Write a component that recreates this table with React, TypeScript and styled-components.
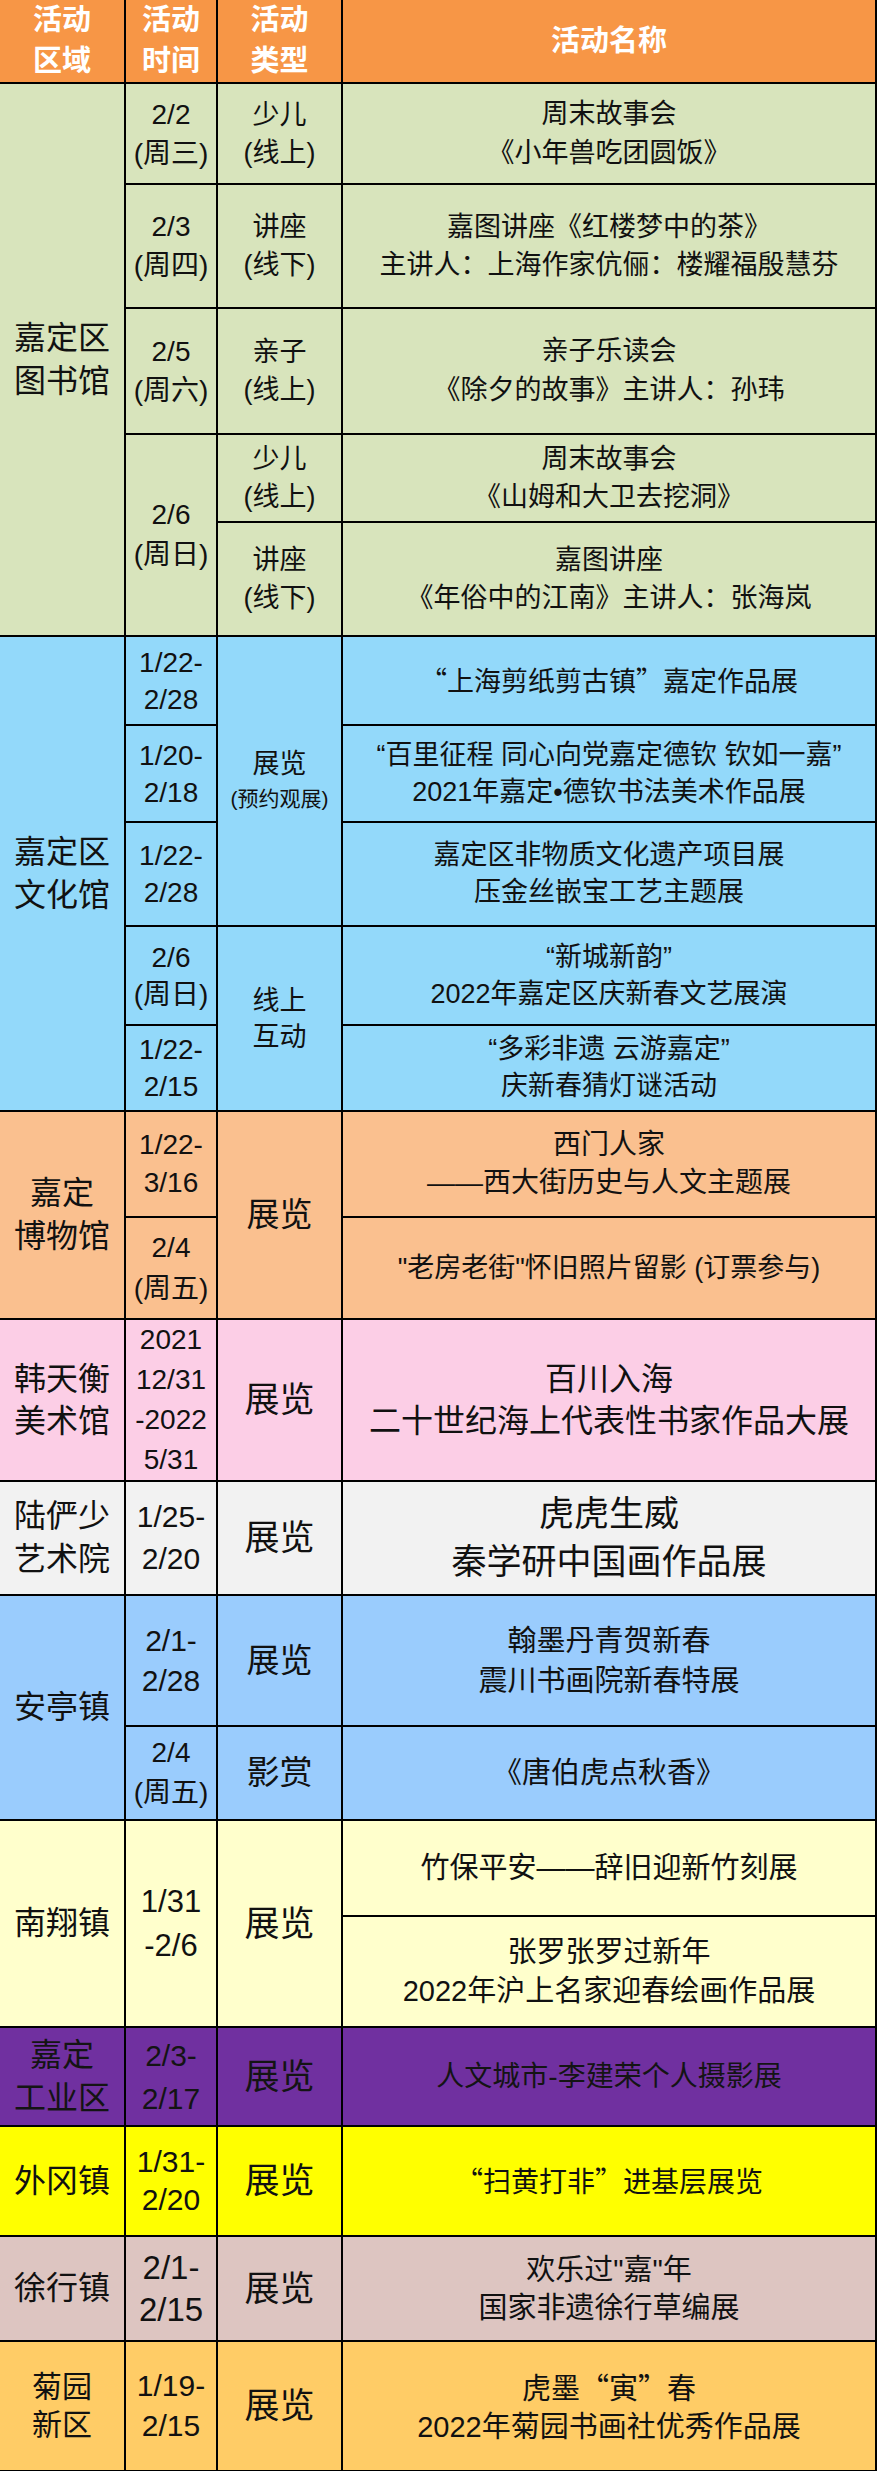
import React from "react";
import styled, { createGlobalStyle } from "styled-components";

const GlobalStyle = createGlobalStyle`
  html, body {
    margin: 0;
    padding: 0;
    background: #ffffff;
  }
  body {
    font-family: "Liberation Sans", "Noto Sans CJK SC", sans-serif;
  }
`;

type Text = { lines: React.ReactNode[]; size: number; lh: number; span?: number };

type Line = {
  h: number;
  venue?: Text;
  date?: Text;
  kind?: Text;
  name: Text;
};

type Section = { bg: string; ink?: string; rows: Line[] };

// full-width quote marks, as the CJK font draws them
const Wide = styled.span`
  font-family: "Noto Sans CJK SC", sans-serif;
`;

const Small = styled.span`
  font-size: 21px;
  line-height: 33px;
`;

const t = (lines: React.ReactNode[], size: number, lh: number, span?: number): Text => ({
  lines,
  size,
  lh,
  span,
});

const sections: Section[] = [
  {
    bg: "#d8e4bc",
    rows: [
      {
        h: 101,
        venue: t(["嘉定区", "图书馆"], 32, 43, 5),
        date: t(["2/2", "(周三)"], 28, 39),
        kind: t(["少儿", "(线上)"], 27, 38),
        name: t(["周末故事会", "《小年兽吃团圆饭》"], 27, 39),
      },
      {
        h: 124,
        date: t(["2/3", "(周四)"], 28, 39),
        kind: t(["讲座", "(线下)"], 27, 38),
        name: t(["嘉图讲座《红楼梦中的茶》", "主讲人：上海作家伉俪：楼耀福殷慧芬"], 27, 38),
      },
      {
        h: 126,
        date: t(["2/5", "(周六)"], 28, 39),
        kind: t(["亲子", "(线上)"], 27, 38),
        name: t(["亲子乐读会", "《除夕的故事》主讲人：孙玮"], 27, 39),
      },
      {
        h: 88,
        date: t(["2/6", "(周日)"], 28, 40, 2),
        kind: t(["少儿", "(线上)"], 27, 38),
        name: t(["周末故事会", "《山姆和大卫去挖洞》"], 27, 38),
      },
      {
        h: 114,
        kind: t(["讲座", "(线下)"], 27, 38),
        name: t(["嘉图讲座", "《年俗中的江南》主讲人：张海岚"], 27, 38),
      },
    ],
  },
  {
    bg: "#93d9fa",
    rows: [
      {
        h: 89,
        venue: t(["嘉定区", "文化馆"], 32, 43, 5),
        date: t(["1/22-", "2/28"], 28, 37),
        kind: t(["展览", <Small key="s">(预约观展)</Small>], 27, 33, 3),
        name: t([<React.Fragment key="a"><Wide>“</Wide>上海剪纸剪古镇<Wide>”</Wide>嘉定作品展</React.Fragment>], 27, 37),
      },
      {
        h: 97,
        date: t(["1/20-", "2/18"], 28, 37),
        name: t(["“百里征程 同心向党嘉定德钦 钦如一嘉”", "2021年嘉定•德钦书法美术作品展"], 27, 37),
      },
      {
        h: 104,
        date: t(["1/22-", "2/28"], 28, 37),
        name: t(["嘉定区非物质文化遗产项目展", "压金丝嵌宝工艺主题展"], 27, 37),
      },
      {
        h: 99,
        date: t(["2/6", "(周日)"], 28, 37),
        kind: t(["线上", "互动"], 27, 36, 2),
        name: t(["“新城新韵”", "2022年嘉定区庆新春文艺展演"], 27, 37),
      },
      {
        h: 86,
        date: t(["1/22-", "2/15"], 28, 37),
        name: t(["“多彩非遗 云游嘉定”", "庆新春猜灯谜活动"], 27, 37),
      },
    ],
  },
  {
    bg: "#fac08f",
    rows: [
      {
        h: 106,
        venue: t(["嘉定", "博物馆"], 32, 43, 2),
        date: t(["1/22-", "3/16"], 28, 38),
        kind: t(["展览"], 33, 40, 2),
        name: t(["西门人家", "——西大街历史与人文主题展"], 28, 38),
      },
      {
        h: 102,
        date: t(["2/4", "(周五)"], 28, 41),
        name: t(["\"老房老街\"怀旧照片留影 (订票参与)"], 27, 38),
      },
    ],
  },
  {
    bg: "#fccee6",
    rows: [
      {
        h: 161,
        venue: t(["韩天衡", "美术馆"], 32, 42),
        date: t(["2021", "12/31", "-2022", "5/31"], 28, 40),
        kind: t(["展览"], 35, 42),
        name: t(["百川入海", "二十世纪海上代表性书家作品大展"], 32, 42),
      },
    ],
  },
  {
    bg: "#f2f2f2",
    rows: [
      {
        h: 114,
        venue: t(["陆俨少", "艺术院"], 32, 43),
        date: t(["1/25-", "2/20"], 30, 42),
        kind: t(["展览"], 35, 42),
        name: t(["虎虎生威", "秦学研中国画作品展"], 35, 48),
      },
    ],
  },
  {
    bg: "#9accfd",
    rows: [
      {
        h: 131,
        venue: t(["安亭镇"], 32, 43, 2),
        date: t(["2/1-", "2/28"], 30, 40),
        kind: t(["展览"], 33, 40),
        name: t(["翰墨丹青贺新春", "震川书画院新春特展"], 29, 40),
      },
      {
        h: 94,
        date: t(["2/4", "(周五)"], 28, 40),
        kind: t(["影赏"], 33, 40),
        name: t(["《唐伯虎点秋香》"], 29, 40),
      },
    ],
  },
  {
    bg: "#ffffcc",
    rows: [
      {
        h: 96,
        venue: t(["南翔镇"], 32, 43, 2),
        date: t(["1/31", "-2/6"], 31, 44, 2),
        kind: t(["展览"], 35, 42, 2),
        name: t(["竹保平安——辞旧迎新竹刻展"], 29, 39),
      },
      {
        h: 111,
        name: t(["张罗张罗过新年", "2022年沪上名家迎春绘画作品展"], 29, 39),
      },
    ],
  },
  {
    bg: "#7030a0",
    ink: "#141414",
    rows: [
      {
        h: 99,
        venue: t(["嘉定", "工业区"], 32, 43),
        date: t(["2/3-", "2/17"], 30, 43),
        kind: t(["展览"], 35, 42),
        name: t(["人文城市-李建荣个人摄影展"], 28, 40),
      },
    ],
  },
  {
    bg: "#ffff00",
    rows: [
      {
        h: 110,
        venue: t(["外冈镇"], 32, 43),
        date: t(["1/31-", "2/20"], 30, 38),
        kind: t(["展览"], 35, 42),
        name: t([<React.Fragment key="b"><Wide>“</Wide>扫黄打非<Wide>”</Wide>进基层展览</React.Fragment>], 28, 40),
      },
    ],
  },
  {
    bg: "#ddc5c1",
    rows: [
      {
        h: 105,
        venue: t(["徐行镇"], 32, 43),
        date: t(["2/1-", "2/15"], 33, 42),
        kind: t(["展览"], 35, 42),
        name: t(["欢乐过\"嘉\"年", "国家非遗徐行草编展"], 29, 38),
      },
    ],
  },
  {
    bg: "#ffcc66",
    rows: [
      {
        h: 130,
        venue: t(["菊园", "新区"], 30, 38),
        date: t(["1/19-", "2/15"], 30, 40),
        kind: t(["展览"], 35, 42),
        name: t([<React.Fragment key="c">虎墨<Wide>“</Wide>寅<Wide>”</Wide>春</React.Fragment>, "2022年菊园书画社优秀作品展"], 29, 38),
      },
    ],
  },
];

const Sheet = styled.table`
  width: 877px;
  table-layout: fixed;
  border-collapse: separate;
  border-spacing: 0;
`;

const Head = styled.thead`
  background: #f79646;
  color: #ffffff;
`;

const Group = styled.tbody<{ $bg: string; $ink?: string }>`
  background: ${(p) => p.$bg};
  color: ${(p) => p.$ink ?? "#111111"};
`;

const Row = styled.tr<{ $h: number }>`
  height: ${(p) => p.$h}px;
`;

const Cell = styled.td<{ $size: number; $lh: number }>`
  padding: 0;
  border-right: 2px solid #000000;
  border-bottom: 2px solid #000000;
  text-align: center;
  vertical-align: middle;
  white-space: nowrap;
  overflow: hidden;
  font-size: ${(p) => p.$size}px;
  line-height: ${(p) => p.$lh}px;
`;

const HeadCell = styled(Cell).attrs({ as: "th" })`
  font-weight: 700;
`;

const Lines = ({ lines }: { lines: React.ReactNode[] }) => (
  <>
    {lines.map((l, i) => (
      <React.Fragment key={i}>
        {i > 0 && <br />}
        {l}
      </React.Fragment>
    ))}
  </>
);

const Field = ({ text }: { text?: Text }) =>
  text ? (
    <Cell $size={text.size} $lh={text.lh} rowSpan={text.span}>
      <Lines lines={text.lines} />
    </Cell>
  ) : null;

const App = () => {
  return (
    <>
      <GlobalStyle />
      <Sheet>
        <colgroup>
          <col style={{ width: 126 }} />
          <col style={{ width: 92 }} />
          <col style={{ width: 125 }} />
          <col style={{ width: 534 }} />
        </colgroup>
        <Head>
          <Row $h={83}>
            <HeadCell $size={29} $lh={41}>活动<br />区域</HeadCell>
            <HeadCell $size={29} $lh={41}>活动<br />时间</HeadCell>
            <HeadCell $size={29} $lh={41}>活动<br />类型</HeadCell>
            <HeadCell $size={29} $lh={41}>活动名称</HeadCell>
          </Row>
        </Head>
        {sections.map((s, si) => (
          <Group key={si} $bg={s.bg} $ink={s.ink}>
            {s.rows.map((r, ri) => (
              <Row key={ri} $h={r.h}>
                <Field text={r.venue} />
                <Field text={r.date} />
                <Field text={r.kind} />
                <Field text={r.name} />
              </Row>
            ))}
          </Group>
        ))}
      </Sheet>
    </>
  );
};

export default App;
